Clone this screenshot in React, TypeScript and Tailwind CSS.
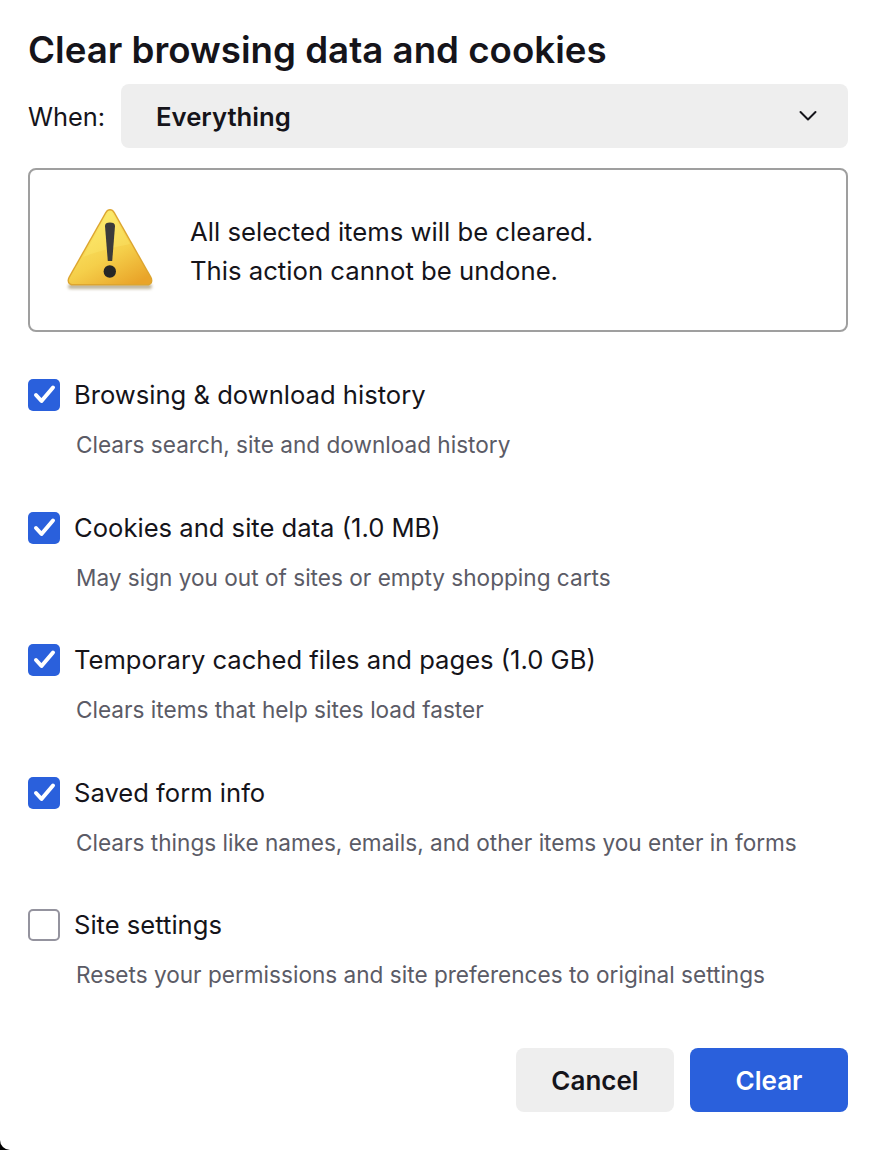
const items = [
  { label: "Browsing & download history", desc: "Clears search, site and download history", on: true },
  { label: "Cookies and site data (1.0 MB)", desc: "May sign you out of sites or empty shopping carts", on: true },
  { label: "Temporary cached files and pages (1.0 GB)", desc: "Clears items that help sites load faster", on: true },
  { label: "Saved form info", desc: "Clears things like names, emails, and other items you enter in forms", on: true },
  { label: "Site settings", desc: "Resets your permissions and site preferences to original settings", on: false },
];

function WarningIcon() {
  return (
    <svg width="100" height="90" viewBox="0 0 100 90" className="shrink-0">
      <defs>
        <linearGradient id="tri" x1="0.25" y1="0.1" x2="0.8" y2="1">
          <stop offset="0" stopColor="#fbe96a" />
          <stop offset="0.55" stopColor="#f5cf4a" />
          <stop offset="1" stopColor="#e9a429" />
        </linearGradient>
        <filter id="blur" x="-20%" y="-100%" width="140%" height="300%">
          <feGaussianBlur stdDeviation="1.6" />
        </filter>
        <filter id="soft" x="-20%" y="-20%" width="140%" height="140%">
          <feGaussianBlur stdDeviation="0.7" />
        </filter>
      </defs>
      <rect x="8" y="79" width="84" height="5" rx="2.5" fill="#8a7a50" opacity="0.55" filter="url(#blur)" />
      <path
        d="M50 4 C52 4 53.5 5 54.8 7.2 L91.5 72 C93.6 76 92 80.5 87.5 80.5 L12.5 80.5 C8 80.5 6.4 76 8.5 72 L45.2 7.2 C46.5 5 48 4 50 4 Z"
        fill="#dda52f"
      />
      <path
        d="M50 5.5 C51.5 5.5 52.6 6.3 53.6 8 L90.3 72.7 C92 75.9 90.8 79 87.3 79 L12.7 79 C9.2 79 8 75.9 9.7 72.7 L46.4 8 C47.4 6.3 48.5 5.5 50 5.5 Z"
        fill="url(#tri)"
      />
      <path
        d="M50 7 C51 7 52 7.8 52.8 9.2 L70 39 C50 43 36 47 23 52 L47.2 9.2 C48 7.8 49 7 50 7 Z"
        fill="#fff27a"
        opacity="0.25"
      />
      <g filter="url(#soft)">
        <path d="M45 21 C45 18.5 46.8 17.5 50 17.5 C53.2 17.5 55 18.5 55 21 L52.2 56 L47.8 56 Z" fill="#3a3a3a" />
        <circle cx="49.8" cy="66.5" r="6.2" fill="#262626" />
      </g>
    </svg>
  );
}

function Box({ on }: { on: boolean }) {
  if (!on) {
    return <div className="w-8 h-8 shrink-0 rounded-[5px] border-2 border-[#94939e] bg-white" />;
  }
  return (
    <div className="w-8 h-8 shrink-0 rounded-[5px] bg-[#2a60dc] flex items-center justify-center">
      <svg width="32" height="32" viewBox="0 0 32 32" fill="none">
        <path d="M8 16 L13.5 22 L25 8.5" stroke="#fff" strokeWidth="4" strokeLinecap="round" strokeLinejoin="round" />
      </svg>
    </div>
  );
}

export default function App() {
  return (
    <div className="w-[870px] h-[1150px] bg-black overflow-hidden">
      <div
        className="w-[870px] h-[1150px] bg-white rounded-bl-[10px] pl-[28px] pr-[22px] pt-[26px] text-[#15141a]"
        style={{ fontFamily: "Inter, 'Liberation Sans', sans-serif" }}
      >
        <h1 className="text-[36.7px] leading-[48px] font-semibold h-[48px]">Clear browsing data and cookies</h1>
        <div className="flex items-center h-[64px] mt-[10px]">
          <span className="text-[25.4px] w-[93px] pt-[2px]">When:</span>
          <div className="flex-1 h-[64px] rounded-[8px] bg-[#eeeeee] flex items-center justify-between pl-[35px] pr-[30px]">
            <span className="text-[25.7px] font-semibold pt-[2px]">Everything</span>
            <svg width="20" height="12" viewBox="0 0 20 12" fill="none">
              <path d="M2.5 2 L10 9.5 L17.5 2" stroke="#15141a" strokeWidth="2" strokeLinecap="round" strokeLinejoin="round" />
            </svg>
          </div>
        </div>
        <div className="mt-[20px] h-[164px] rounded-[8px] border-2 border-[#9f9f9f] flex items-center pl-[30px]">
          <WarningIcon />
          <div className="ml-[30px] text-[25.7px] leading-[39px] mt-[2px]">
            <p>All selected items will be cleared.</p>
            <p>This action cannot be undone.</p>
          </div>
        </div>
        <div className="mt-[47px] flex flex-col gap-[36.5px]">
          {items.map((it) => (
            <div key={it.label} className="h-[96px]">
              <div className="flex items-center h-[32px] gap-[14px]">
                <Box on={it.on} />
                <span className="text-[25.6px] leading-[32px]">{it.label}</span>
              </div>
              <p className="mt-[17px] ml-[48px] text-[22.6px] leading-[34px] text-[#5b5b66]">{it.desc}</p>
            </div>
          ))}
        </div>
        <div className="mt-[43px] flex justify-end gap-[16px]">
          <button className="w-[158px] h-[64px] rounded-[8px] bg-[#eeeeee] text-[26px] font-semibold">Cancel</button>
          <button className="w-[158px] h-[64px] rounded-[8px] bg-[#2a60dc] text-white text-[26px] font-semibold">Clear</button>
        </div>
      </div>
    </div>
  );
}
